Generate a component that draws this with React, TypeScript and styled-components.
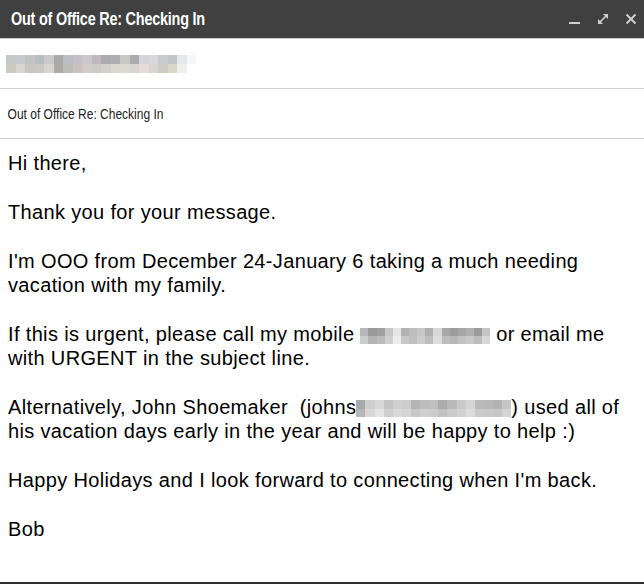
import React from 'react';
import styled, { createGlobalStyle } from 'styled-components';

const GlobalStyle = createGlobalStyle`
  html, body {
    margin: 0;
    padding: 0;
    background: #ffffff;
  }
  body {
    font-family: "Liberation Sans", Arial, sans-serif;
  }
`;

const Window = styled.div`
  width: 644px;
  height: 584px;
  display: flex;
  flex-direction: column;
  background: #fff;
  border-bottom: 2px solid #303030;
  box-sizing: border-box;
`;

const TitleBar = styled.div`
  height: 38px;
  background: #404040;
  display: flex;
  align-items: center;
  padding: 0 6px 0 11px;
  border-bottom: 1px solid #c8c8c8;
`;

const Title = styled.div`
  flex: 1;
  color: #fff;
  font-weight: bold;
  font-size: 19px;
  letter-spacing: -0.3px;
  white-space: nowrap;
  transform: scaleX(0.76);
  transform-origin: left center;
`;

const Controls = styled.div`
  display: flex;
  align-items: center;
  gap: 14px;
`;

const Ctrl = styled.svg`
  width: 14px;
  height: 14px;
  display: block;
`;

const Row = styled.div<{ $h: number }>`
  height: ${p => p.$h}px;
  display: flex;
  align-items: center;
  padding: 0 8px 0 6px;
  border-bottom: 1px solid #cfcfcf;
  flex-shrink: 0;
`;

const Subject = styled.div`
  font-size: 15px;
  color: #222;
  padding-left: 2px;
  white-space: nowrap;
  transform: scaleX(0.8);
  transform-origin: left center;
`;

const Body = styled.div`
  padding: 12px 8px 0 8px;
  font-size: 20px;
  letter-spacing: 0.35px;
  line-height: 24.4px;
  color: #000;
`;

const Para = styled.p`
  margin: 0 0 24.4px 0;
`;

const Pixels = styled.span<{ $w: number; $h: number; $cols: number }>`
  display: inline-grid;
  vertical-align: middle;
  width: ${p => p.$w}px;
  height: ${p => p.$h}px;
  grid-template-columns: repeat(${p => p.$cols}, 1fr);
  grid-auto-rows: 1fr;
`;

const Cell = styled.span<{ $c: string }>`
  background: ${p => p.$c};
`;

const Redacted = ({ w, h, cols, colors }: { w: number; h: number; cols: number; colors: string[] }) => (
  <Pixels $w={w} $h={h} $cols={cols}>
    {colors.map((c, i) => <Cell key={i} $c={c} />)}
  </Pixels>
);

const toColors = [
  '#c5c7c9', '#c8c9ce', '#c3c3c6', '#b8bec0', '#c9cbcb', '#a9a9aa', '#bcbdc3', '#c4c1c6', '#cac7cd', '#bdb9bf', '#aaaaae', '#aeaeb2', '#c7c7c3', '#aaaaaf', '#d7d4d9', '#d9d9da', '#c9c9ce', '#c3c4c6', '#e6e7e8', '#f6f7f8',
  '#cbc9c2', '#d7d6d0', '#c9c5c0', '#c7c8c0', '#d5d4cf', '#aeaba5', '#bcbdb6', '#c8c1bc', '#d2cbc7', '#cdcac4', '#d3cfc9', '#d9d7d0', '#dcdbd2', '#d9d5cf', '#e3dcd7', '#d8d6cf', '#cbcac3', '#d8d8c8', '#eeeeea', '#ffffff',
];

const phoneColors = [
  '#b8b8b8', '#9a9a9a', '#a0a0a0', '#c8c8c8', '#e6e6e6', '#b2b2b2', '#bdbdbd', '#c6c6c6', '#b0b0b0', '#d8d8d8', '#a8a8a8', '#9d9d9d', '#a6a6a6', '#b0b0b0', '#9a9a9a', '#c4c4c4',
  '#cdcdcd', '#b4b4b4', '#bbbbbb', '#d0d0d0', '#ececec', '#c8c8c8', '#c0c0c0', '#cccccc', '#bdbdbd', '#dedede', '#bdbdbd', '#b8b8b8', '#c2c2c2', '#c8c8c8', '#bcbcbc', '#d6d6d6',
];

const emailColors = [
  '#a9a9a9', '#cfcfcf', '#d8d8d8', '#c5c5c5', '#d0d0d0', '#cdcdcd', '#b5b5b5', '#bdbdbd', '#c0c0c0', '#acacac', '#b9b9b9', '#c9c9c9', '#d5d5d5', '#bababa', '#b8b8b8', '#b3b3b3', '#c6c6c6',
  '#b8b8b8', '#d8d8d8', '#e4e4e4', '#cfcfcf', '#dadada', '#d5d5d5', '#c8c8c8', '#cfcfcf', '#cdcdcd', '#c2c2c2', '#cacaca', '#d2d2d2', '#dcdcdc', '#cbcbcb', '#c9c9c9', '#c6c6c6', '#d4d4d4',
];

export default function App() {
  return (
    <>
      <GlobalStyle />
      <Window>
        <TitleBar>
          <Title>Out of Office Re: Checking In</Title>
          <Controls>
            <Ctrl viewBox="0 0 14 14">
              <rect x="1" y="10" width="11" height="2" fill="#cfcfcf" />
            </Ctrl>
            <Ctrl viewBox="0 0 14 14">
              <g stroke="#cfcfcf" strokeWidth="1.6" fill="none">
                <path d="M4 10 L10 4" />
              </g>
              <path d="M7 2 H12 V7 Z" fill="#cfcfcf" />
              <path d="M2 7 V12 H7 Z" fill="#cfcfcf" />
            </Ctrl>
            <Ctrl viewBox="0 0 14 14">
              <path d="M2.5 2.5 L11.5 11.5 M11.5 2.5 L2.5 11.5" stroke="#cfcfcf" strokeWidth="2" />
            </Ctrl>
          </Controls>
        </TitleBar>
        <Row $h={49}>
          <Redacted w={190} h={18} cols={20} colors={toColors} />
        </Row>
        <Row $h={49}>
          <Subject>Out of Office Re: Checking In</Subject>
        </Row>
        <Body>
          <Para>Hi there,</Para>
          <Para>Thank you for your message.</Para>
          <Para>I'm OOO from December 24-January 6 taking a much needing vacation with my family.</Para>
          <Para>
            If this is urgent, please call my mobile{' '}
            <Redacted w={130} h={16} cols={16} colors={phoneColors} />{' '}
            or email me with URGENT in the subject line.
          </Para>
          <Para>
            Alternatively, John Shoemaker&nbsp; (johns<Redacted w={155} h={17} cols={17} colors={emailColors} />) used all of his vacation days early in the year and will be happy to help :)
          </Para>
          <Para>Happy Holidays and I look forward to connecting when I'm back.</Para>
          <Para>Bob</Para>
        </Body>
      </Window>
    </>
  );
}
